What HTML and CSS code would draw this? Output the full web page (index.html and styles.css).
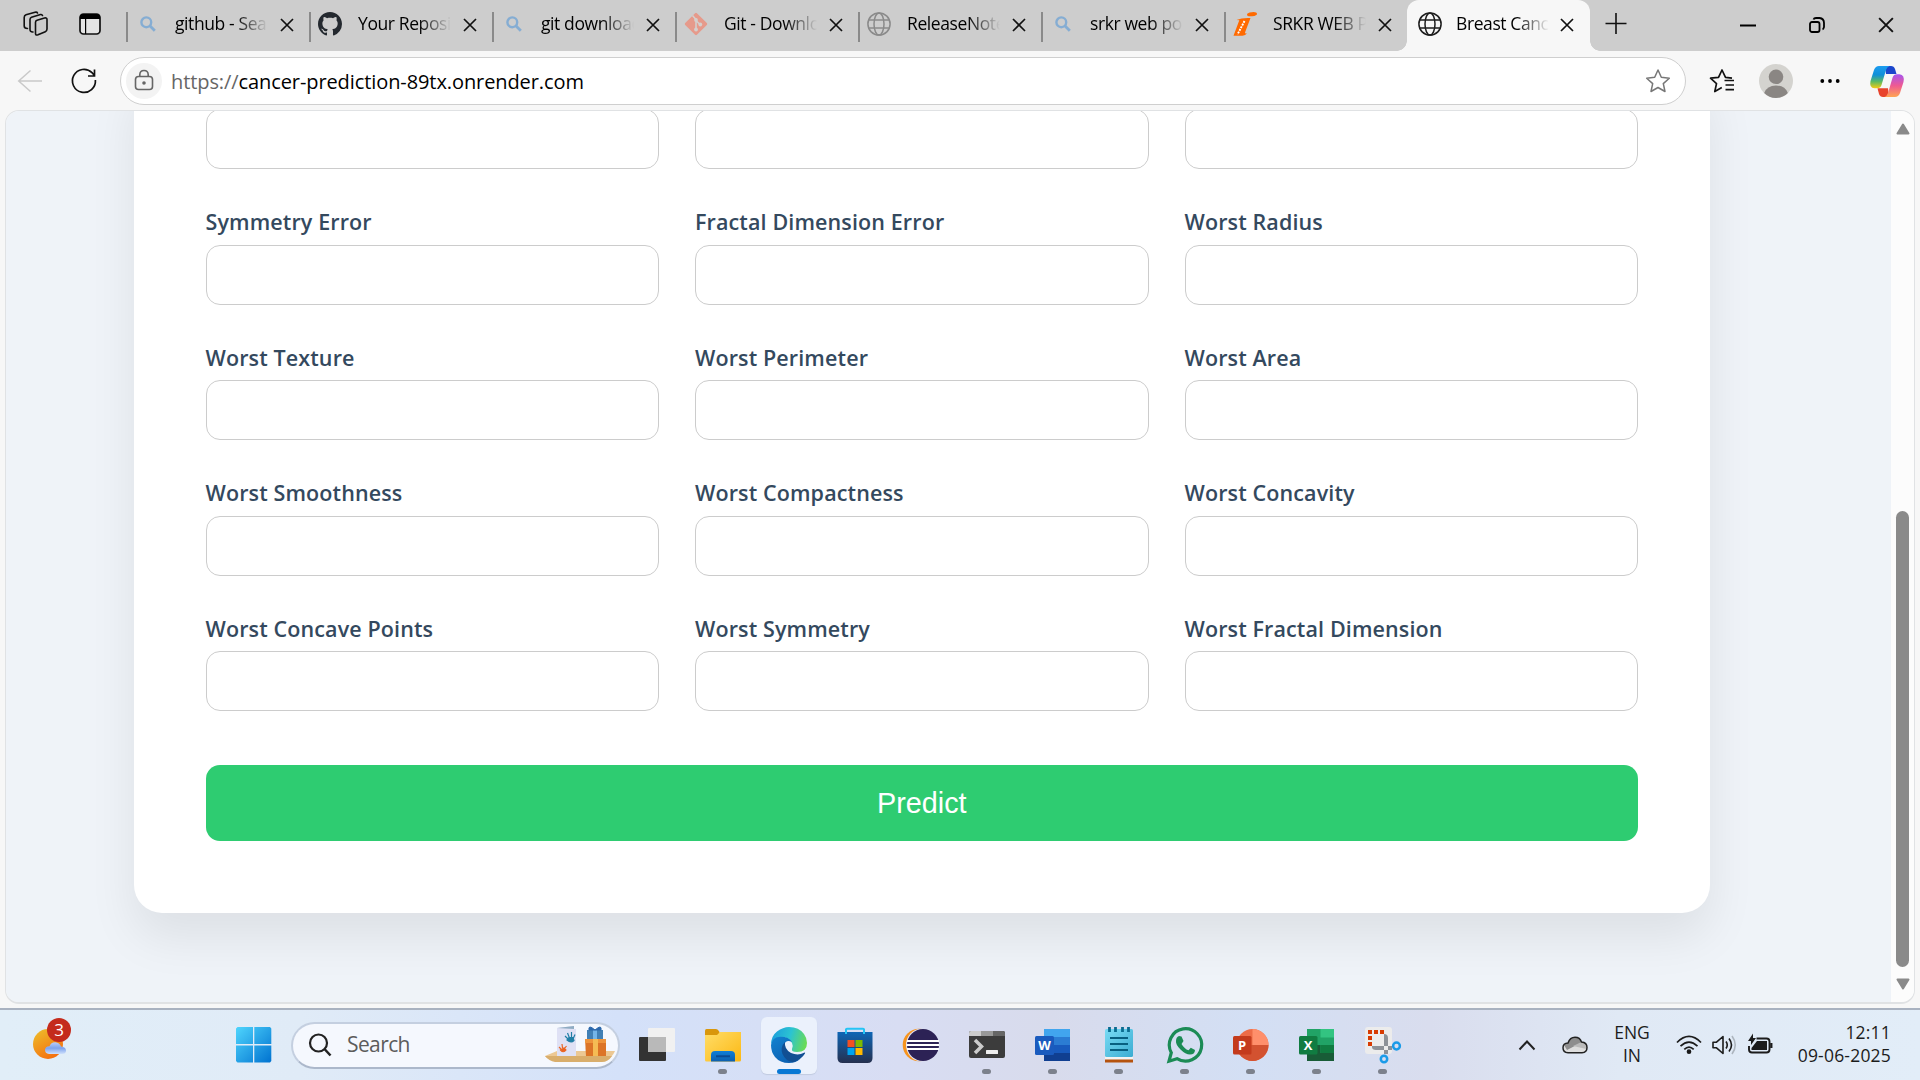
FILE: index.html
```html
<!DOCTYPE html>
<html lang="en">
<head>
<meta charset="utf-8">
<title>Breast Cancer Prediction</title>
<link rel="stylesheet" href="styles.css">
</head>
<body>
<svg class="defs" width="0" height="0">
  <defs>
    <symbol id="x" viewBox="0 0 14 14"><path d="M1 1l12 12M13 1L1 13" fill="none" stroke="#111" stroke-width="1.7"/></symbol>
    <symbol id="mag" viewBox="0 0 16 16"><circle cx="6.3" cy="6.3" r="4.9" fill="none" stroke="#85add3" stroke-width="2.4"/><path d="M9.8 9.8l5 5" stroke="#85add3" stroke-width="2.8"/></symbol>
    <symbol id="globe" viewBox="0 0 24 24"><g fill="none" stroke="currentColor" stroke-width="1.5"><circle cx="12" cy="12" r="11.1"/><ellipse cx="12" cy="12" rx="5" ry="11.1"/><path d="M1.8 8h20.4M1.8 16h20.4"/></g></symbol>
    <linearGradient id="win" x1="0" y1="0" x2="1" y2="1"><stop offset="0" stop-color="#4fd5fd"/><stop offset="1" stop-color="#0072d0"/></linearGradient>
    <linearGradient id="sun" x1="0" y1="0" x2=".6" y2="1"><stop offset="0" stop-color="#edc12c"/><stop offset="1" stop-color="#f4700f"/></linearGradient>
    <linearGradient id="cloud" x1="0" y1="0" x2="0" y2="1"><stop offset="0" stop-color="#b9cdfa"/><stop offset=".5" stop-color="#7da3ee"/><stop offset="1" stop-color="#cfe0fb"/></linearGradient>
    <linearGradient id="folder" x1="0" y1="0" x2="1" y2="1"><stop offset="0" stop-color="#ffdd68"/><stop offset="1" stop-color="#fcb813"/></linearGradient>
    <linearGradient id="blue" x1="0" y1="0" x2="0" y2="1"><stop offset="0" stop-color="#0f7fd8"/><stop offset="1" stop-color="#0c5fae"/></linearGradient>
    <linearGradient id="store" x1="0" y1="0" x2="0" y2="1"><stop offset="0" stop-color="#0e66b6"/><stop offset="1" stop-color="#25304f"/></linearGradient>
    <linearGradient id="edgeTop" x1="0" y1=".4" x2="1" y2=".6"><stop offset="0" stop-color="#1c9fdc"/><stop offset=".5" stop-color="#2bc3d2"/><stop offset="1" stop-color="#6bdc52"/></linearGradient>
    <linearGradient id="edgeLow" x1="0" y1="0" x2=".7" y2="1"><stop offset="0" stop-color="#1182d0"/><stop offset="1" stop-color="#0d5fb0"/></linearGradient>
    <linearGradient id="note" x1="0" y1="0" x2="1" y2="1"><stop offset="0" stop-color="#79dbf4"/><stop offset="1" stop-color="#3bacd2"/></linearGradient>
    <linearGradient id="copA" x1="0" y1="0" x2="0" y2="1"><stop offset="0" stop-color="#1c9cf0"/><stop offset=".4" stop-color="#0f8fd8"/><stop offset=".7" stop-color="#5cba62"/><stop offset="1" stop-color="#f6cb12"/></linearGradient>
    <linearGradient id="copB" x1="0" y1="0" x2="0" y2="1"><stop offset="0" stop-color="#a755ee"/><stop offset=".5" stop-color="#ef5a92"/><stop offset="1" stop-color="#ffa552"/></linearGradient>
  </defs>
</svg>

<div class="tabs">
  <div class="tab-tools">
    <svg width="26" height="26" viewBox="0 0 26 26" fill="none" stroke="#111" stroke-width="1.6" stroke-linejoin="round" stroke-linecap="round"><path d="M12.500 11.200Q12.500 9.700 14 9.200L21.500 7Q24 6.400 24 8.600V18Q24 20 22.300 20.700L15 23.800Q12.500 24.700 12.500 22.500z"/><path d="M10 21Q7 21.200 7 18.500V8.500Q7 6.800 8.500 6.200L17.500 3.600Q19 3.200 19.500 4.500"/><path d="M4.500 17.500Q1.200 17.500 1.200 15V6.500Q1.200 4.500 3 3.800L12 1.200Q14 .8 14.500 2"/></svg>
    <svg width="22" height="22" viewBox="0 0 22 22"><rect x="1" y="1" width="20" height="20" rx="3.500" fill="#e4e4e4" stroke="#111" stroke-width="1.700"/><path d="M1 6V4q0-3 3-3h14q3 0 3 3v2zM6 6h1.200v15H6z" fill="#000"/></svg>
  </div>
  <div class="tab"><svg class="fav small"><use href="#mag"/></svg><span class="title">github - Search</span><svg class="close"><use href="#x"/></svg></div>
  <div class="tab"><svg class="fav" viewBox="0 0 16 16"><path fill="#24292f" d="M8 0C3.580 0 0 3.580 0 8c0 3.540 2.290 6.530 5.470 7.590.4.070.550-.170.550-.380 0-.190-.010-.820-.010-1.490-2.010.370-2.530-.490-2.690-.940-.090-.230-.480-.940-.820-1.130-.280-.150-.680-.520-.010-.530.630-.010 1.080.580 1.230.820.720 1.210 1.870.870 2.330.660.070-.520.280-.870.510-1.070-1.780-.2-3.640-.890-3.640-3.950 0-.870.310-1.590.820-2.150-.080-.2-.360-1.020.080-2.120 0 0 .670-.210 2.200.820.640-.180 1.320-.270 2-.270s1.360.090 2 .270c1.530-1.040 2.200-.820 2.200-.820.440 1.100.160 1.920.080 2.120.510.560.820 1.270.820 2.150 0 3.070-1.870 3.750-3.650 3.950.290.250.540.730.540 1.480 0 1.070-.010 1.930-.010 2.200 0 .210.150.460.550.380A8.010 8.010 0 0016 8c0-4.420-3.580-8-8-8z"/></svg><span class="title">Your Repositories</span><svg class="close"><use href="#x"/></svg></div>
  <div class="tab"><svg class="fav small"><use href="#mag"/></svg><span class="title">git download</span><svg class="close"><use href="#x"/></svg></div>
  <div class="tab"><svg class="fav" viewBox="0 0 24 24"><rect x="3.700" y="3.700" width="16.600" height="16.600" rx="1.300" transform="rotate(45 12 12)" fill="#e69a8b"/><path d="M8.500 3.500l3.500 4v10M12 8.500l4 4" stroke="#d4d0ce" stroke-width="1.600" fill="none"/><circle cx="12" cy="8" r="1.900" fill="#d4d0ce"/><circle cx="12" cy="17.500" r="1.900" fill="#d4d0ce"/><circle cx="16.300" cy="12.500" r="1.900" fill="#d4d0ce"/></svg><span class="title">Git - Downloads</span><svg class="close"><use href="#x"/></svg></div>
  <div class="tab"><svg class="fav gray"><use href="#globe"/></svg><span class="title">ReleaseNotes</span><svg class="close"><use href="#x"/></svg></div>
  <div class="tab"><svg class="fav small"><use href="#mag"/></svg><span class="title">srkr web portal</span><svg class="close"><use href="#x"/></svg></div>
  <div class="tab"><svg class="fav" viewBox="0 0 24 24"><ellipse cx="19" cy="2.200" rx="5" ry="2" transform="rotate(-6 19 2.200)" fill="#ff6a00"/><path d="M3.500 8Q9 5.500 17.500 6L12 20.500q-.3 1.200 2 .8-1.500 2.400-4.500 2.500H.5L6.300 8.300z" fill="#ff6a00"/><path d="M11.500 9L4.500 22.500" stroke="#fff" stroke-width="1.900" stroke-dasharray="2 1"/></svg><span class="title">SRKR WEB PORTAL</span><svg class="close"><use href="#x"/></svg></div>
  <div class="tab active"><svg class="fav"><use href="#globe"/></svg><span class="title">Breast Cancer</span><svg class="close"><use href="#x"/></svg></div>
  <svg class="plus" width="22" height="22" viewBox="0 0 22 22"><path d="M11 0v21M.5 10.500h21" stroke="#111" stroke-width="1.600"/></svg>
  <div class="win-controls">
    <svg width="16" height="16" viewBox="0 0 16 16"><path d="M0 8.500h16" stroke="#000" stroke-width="2"/></svg>
    <svg width="16" height="16" viewBox="0 0 16 16" fill="none" stroke="#000" stroke-width="1.800"><rect x="1" y="5" width="9.500" height="10" rx="2"/><path d="M4.500 2.500Q5 1 7 1h3.500Q15 1.500 15 6v4Q14.500 12 13.500 12.300"/></svg>
    <svg width="16" height="16"><use href="#x"/></svg>
  </div>
</div>

<div class="toolbar">
  <svg class="back" width="26" height="24" viewBox="0 0 26 24"><path d="M24 12H.7M12.500 1.500L.7 12l11.800 10.500" fill="none" stroke="#c9c9c9" stroke-width="1.500"/></svg>
  <svg class="reload" width="26" height="26" viewBox="0 0 26 26"><path d="M24.400 12A11.500 11.500 0 1 1 21 4.700L23.500 7.500M23.500 1.500V8H17" fill="none" stroke="#111" stroke-width="1.700"/></svg>
  <div class="omnibox">
    <span class="lock"><svg width="20" height="22" viewBox="0 0 20 22" fill="none" stroke="#666" stroke-width="1.600"><rect x="1.500" y="7.500" width="17" height="13" rx="3"/><path d="M5.800 7.500V5.500Q6 1.500 10 1.500t4.200 4v2"/><circle cx="10" cy="14" r="1" fill="#555"/></svg></span>
    <span class="url"><i>https://</i>cancer-prediction-89tx.onrender.com</span>
    <svg class="star" width="26" height="26" viewBox="0 0 26 26"><path d="M13 2l3.300 7.300 8 .9-6 5.400 1.700 7.900-7-4-7 4 1.700-7.900-6-5.400 8-.9z" fill="none" stroke="#777" stroke-width="1.500" stroke-linejoin="round"/></svg>
  </div>
  <div class="actions">
    <svg width="26" height="26" viewBox="0 0 26 26"><path d="M25 12.500H15.500M25 17h-8.500M25 21.700h-8.500M12.800 19.600l-7 3.900 1.700-7.900-6-5.400 8-.9L13 2l3.500 7.300 6.500.8" fill="none" stroke="#111" stroke-width="1.700" stroke-linejoin="round"/></svg>
    <svg class="avatar" width="34" height="34" viewBox="0 0 34 34"><circle cx="17" cy="17" r="17" fill="#d4d3cf"/><circle cx="17" cy="12.800" r="7.300" fill="#8a8683"/><path d="M5.200 29Q8 21.500 17 21.500T28.800 29Q24 34 17 34T5.200 29z" fill="#8a8683"/></svg>
    <svg class="dots" width="20" height="6" viewBox="0 0 20 6"><circle cx="2.300" cy="3" r="1.900"/><circle cx="10" cy="3" r="1.900"/><circle cx="17.700" cy="3" r="1.900"/></svg>
    <svg class="copilot" width="34" height="31" viewBox="0 0 34 31"><path d="M15 0h6q3 0 4 3l1.500 5H16z" fill="#1b46cc"/><path d="M19 31h-6q-3 0-4-3l-1.500-5.700H18z" fill="#e8432c"/><path d="M9 0h10.500q-2.500 1-3.500 4L11.500 19Q10.500 22.300 7 22.300H4.500Q-1 22 .5 15L4 4Q5.500 0 9 0z" fill="url(#copA)"/><path d="M25 31H14.500q2.500-1 3.500-4l4.500-15.300Q23.500 8.300 27 8.300h2.500Q35 9 33.500 16L30 27q-1.500 4-5 4z" fill="url(#copB)"/></svg>
  </div>
</div>

<div class="frame">
  <div class="page">
    <form class="card">
      <div class="fields">
        <label><input></label><label><input></label><label><input></label>
        <label><span>Symmetry Error</span><input></label>
        <label><span>Fractal Dimension Error</span><input></label>
        <label><span>Worst Radius</span><input></label>
        <label><span>Worst Texture</span><input></label>
        <label><span>Worst Perimeter</span><input></label>
        <label><span>Worst Area</span><input></label>
        <label><span>Worst Smoothness</span><input></label>
        <label><span>Worst Compactness</span><input></label>
        <label><span>Worst Concavity</span><input></label>
        <label><span>Worst Concave Points</span><input></label>
        <label><span>Worst Symmetry</span><input></label>
        <label><span>Worst Fractal Dimension</span><input></label>
      </div>
      <button type="button">Predict</button>
    </form>
  </div>
  <div class="scrollbar">
    <svg width="14" height="12" viewBox="0 0 14 12"><path d="M7 1.500L12.500 10.500H1.500z" fill="#8a8a8a" stroke="#8a8a8a" stroke-width="2" stroke-linejoin="round"/></svg>
    <div class="thumb"></div>
    <svg width="14" height="12" viewBox="0 0 14 12"><path d="M7 10.500L12.500 1.500H1.500z" fill="#8a8a8a" stroke="#8a8a8a" stroke-width="2" stroke-linejoin="round"/></svg>
  </div>
</div>

<div class="taskbar">
  <div class="weather">
    <svg width="36" height="36" viewBox="0 0 36 36"><circle cx="15" cy="17" r="15" fill="url(#sun)"/><path d="M16 27q-4-.5-4-4t4.500-3.700Q18 15 22.500 15.300q4 .5 5.500 4.200 5 .5 5 4t-4 3.500z" fill="url(#cloud)"/></svg>
    <span class="badge">3</span>
  </div>
  <svg class="start" width="36" height="36" viewBox="0 0 36 36"><path d="M1.500 0H17v17H0V1.500zM18.300 0H34L35.300 1.500V17h-17zM0 18.500h17V35.500H1.500L0 34zM18.300 18.500h17V34L34 35.500H18.300z" fill="url(#win)"/></svg>
  <div class="search">
    <svg width="24" height="24" viewBox="0 0 24 24"><circle cx="10.500" cy="10" r="8.500" fill="none" stroke="#222" stroke-width="2.200"/><path d="M16.500 16l6 6.500" stroke="#222" stroke-width="2.500"/></svg>
    <span>Search</span>
    <svg class="gift" width="71" height="38" viewBox="0 0 71 38"><path d="M0 30l12-5h58q-3 7-9 9H9Q3 34 0 30z" fill="#ecc893"/><path d="M0 30h67q-4 6-10 6H10Q4 35 0 30z" fill="#d9ae6c"/><path d="M12 2l17-2v3h2v27H12z" fill="#dfe1f5"/><path d="M12 2l17-2v3z" fill="#8eabc2"/><path d="M23 13l-3-3M24.500 12l-2-5M26.500 12V6M28 13l2-4.500M22 14q4 3.500 7 .5l-1-3h-4z" stroke="#217fa6" stroke-width="1.200" fill="#217fa6"/><path d="M16 23l-2-2M17.500 22l-.5-4M19.500 22.500l2-2.500M15.500 24q3 3.500 5.500 0l-2-2z" stroke="#eb6422" stroke-width="1.200" fill="#eb6422"/><path d="M42 4h16v10H42z" fill="#4180b5"/><path d="M48 4h4v10h-4z" fill="#74b5e8"/><path d="M50 4Q43-2 44 4zM50 4q7-6 6 0z" fill="#2c69ac" stroke="#2c69ac"/><path d="M40 13h21v17H41z" fill="#dc7427"/><path d="M40 13h21v4H40z" fill="#ee943c"/><path d="M48 13h5v17h-5z" fill="#f5bb54"/></svg>
  </div>
  <div class="apps">
    <div class="app"><svg viewBox="0 0 36 36"><rect x="0" y="10" width="27" height="24" rx="1" fill="#333"/><rect x="9" y="1" width="27" height="24" rx="1" fill="#f1f1f1"/><rect x="9" y="10" width="18" height="15" fill="#b9b9b9"/></svg></div>
    <div class="app run"><svg viewBox="0 0 36 36"><path d="M0 3.500Q0 2 1.500 2H11q2 0 3.500 3V10H0z" fill="#d9970c"/><path d="M0 8h12l3-3h21v28q0 1.500-1.500 1.500h-33Q0 34.500 0 33z" fill="url(#folder)"/><path d="M6 34.500V28q0-4 4-4h16q4 0 4 4v6.500z" fill="url(#blue)"/><path d="M11 29.300h14" stroke="#0a4a92" stroke-width="2"/></svg></div>
    <div class="app run current"><svg viewBox="0 0 36 36"><path d="M0 18Q0 9 6 4.500 12 0 18 0q10 0 15 7 3 4 3 9 0 9-10 9-6 0-5-3 1.500-3 0-6-3-6-10-6Q3 10 0 18z" fill="url(#edgeTop)"/><path d="M0 18Q1 10 9.500 9.800 18 9.700 21 15q-6-3-8 3-1 7 5 12 6 4 11 2Q25 36 18 36 9 36 4 30 0 25 0 18z" fill="url(#edgeLow)"/><path d="M14 15q-5 5-2.500 12 3 7 10.500 8.200Q30 33 34 26.500q.5-1.500-1-.7Q27 29 20 26q-7-4-6-11z" fill="#114f93"/></svg></div>
    <div class="app"><svg viewBox="0 0 36 36"><path d="M9 6V2.500Q9 1.800 10 1.800h16q1 0 1 .7V6" fill="none" stroke="#25c4f5" stroke-width="2"/><path d="M.5 5h35v26q0 5-5 5h-25q-5 0-5-5z" fill="url(#store)"/><path d="M9 2v5M27 2v5" stroke="#25c4f5" stroke-width="2"/><path d="M10.500 13h7v7h-7z" fill="#f25022"/><path d="M18.500 13h7v7h-7z" fill="#7fba00"/><path d="M10.500 21h7v7h-7z" fill="#00a4ef"/><path d="M18.500 21h7v7h-7z" fill="#ffb900"/></svg></div>
    <div class="app"><svg viewBox="0 0 36 36"><circle cx="16" cy="18" r="16.300" fill="#f7941e"/><ellipse cx="18" cy="18" rx="15" ry="16.300" fill="#dfe1f3"/><circle cx="20" cy="18" r="16" fill="#2c2255"/><path d="M4 14h32M3.500 18h32.500M4 22h32" stroke="#fff" stroke-width="1.900"/></svg></div>
    <div class="app run"><svg viewBox="0 0 36 36"><path d="M0 6q0-2 2-2h32q2 0 2 2v23q0 2-2 2H2q-2 0-2-2z" fill="#3c3c3c"/><path d="M0 9V6q0-2 2-2h10v5z" fill="#ccc"/><path d="M12 4h12v5H12z" fill="#999"/><path d="M24 4h10q2 0 2 2v3H24z" fill="#666"/><path d="M6 13l6.500 6.500L6 26" fill="none" stroke="#ccc" stroke-width="3.500"/><rect x="17" y="23" width="12" height="4" rx=".5" fill="#eee"/></svg></div>
    <div class="app run"><svg viewBox="0 0 36 36"><path d="M9 2h26v8.500H9z" fill="#41a5ee"/><path d="M9 10h26v8H9z" fill="#2b7cd3"/><path d="M9 18h26v8H9z" fill="#185abd"/><path d="M9 26h26v8H9z" fill="#103f91"/><rect x="0" y="9" width="19" height="19" rx="1.500" fill="#1a5bbe"/><text x="9.500" y="23" class="glyph">W</text></svg></div>
    <div class="app run"><svg viewBox="0 0 36 36"><path d="M4 31h28v4.500H4z" fill="#b5530f"/><path d="M4 29h28v3.500H4z" fill="#f3f3f3"/><rect x="4" y="2" width="28" height="28" rx="1.500" fill="url(#note)"/><path d="M9 11h18M9 17h18M9 23h18" stroke="#075f81" stroke-width="1.900"/><path d="M8.500 0v5M14.500 0v5M21.500 0v5M27.500 0v5" stroke="#0a6c90" stroke-width="2.800"/></svg></div>
    <div class="app run"><svg viewBox="0 0 36 36"><path d="M2 34.200l2.300-8.500A16.200 16.200 0 1 1 10 31.700z" fill="none" stroke="#1b8b55" stroke-width="3.200"/><path d="M12 9l2.500.5 2 4.500-2 3q3 5 7 6.300l2.300-2.500 4.200 2.200q-.2 4.500-5 4.500-4.500 0-9.500-5T9 14q0-4 3-5z" fill="#1b8b55"/></svg></div>
    <div class="app run"><svg viewBox="0 0 36 36"><circle cx="19.500" cy="18" r="16" fill="#ed6c47"/><path d="M19.500 2a16 16 0 0 1 16 16h-16z" fill="#ff8f6b"/><path d="M35.500 18a16 16 0 0 1-32 0z" fill="#d35230"/><rect x="0" y="9" width="18.500" height="18.500" rx="1.500" fill="#c43b1c"/><text x="9" y="23" class="glyph">P</text></svg></div>
    <div class="app run"><svg viewBox="0 0 36 36"><path d="M8 2h27v32H8z" fill="#21a366"/><path d="M21.500 2H35v8.500H21.500z" fill="#33c481"/><path d="M8 18h13.500v8H8z" fill="#185c37"/><path d="M21.500 18H35v8H21.500z" fill="#107c41"/><path d="M8 26h27v8H8z" fill="#185c37"/><rect x="0" y="9" width="18.500" height="18.500" rx="1.500" fill="#107c41"/><text x="9" y="23" class="glyph">X</text></svg></div>
    <div class="app run"><svg viewBox="0 0 36 36"><rect x="0" y="0" width="27" height="27" rx="3" fill="#ececec"/><path d="M3 3h4v4H3zM9 3h4v4H9zM15 3h4v4h-4zM3 9h4v4H3zM3 15h4v4H3z" fill="#d83b01"/><path d="M7 20q0 3 4 3h16v-4H7zM19 7q4 0 4 4v16h-4z" fill="#8d9298"/><circle cx="31.500" cy="19" r="3.400" fill="none" stroke="#1a9be8" stroke-width="2.500"/><circle cx="19" cy="32" r="3.200" fill="none" stroke="#1a9be8" stroke-width="2.500"/></svg></div>
  </div>
  <div class="tray">
    <svg class="chev" width="18" height="12" viewBox="0 0 18 12"><path d="M1.500 10.500L9 2.500l7.500 8" fill="none" stroke="#222" stroke-width="2"/></svg>
    <svg class="cloud" width="26" height="18" viewBox="0 0 26 18"><path d="M6 16.800Q1 16.500 1 11.800T6 7Q8 1.200 13 1.200T19.500 6Q25 6.500 25 11.500t-5 5.300z" fill="#dedede"/><path d="M2 9q2-2.500 4-2 2-5.500 7-5.500 4.500 0 6.500 5L5 14z" fill="#8e8e8e"/><path d="M11 10l8.500-4Q25 7 24.500 13z" fill="#bbb"/><path d="M6 16.800Q1 16.500 1 11.800T6 7Q8 1.200 13 1.200T19.500 6Q25 6.500 25 11.500t-5 5.300z" fill="none" stroke="#222" stroke-width="1.500"/></svg>
    <div class="lang"><span>ENG</span><span>IN</span></div>
    <svg class="wifi" width="26" height="20" viewBox="0 0 26 20" fill="none" stroke="#1c1c1c" stroke-width="1.700"><path d="M1 7.500Q13-4.500 25 7.500M4.500 11.200q8.500-8 17 0M8.300 14.300q4.700-4.500 9.400 0"/><circle cx="13" cy="16.700" r="1.500" fill="#111"/></svg>
    <svg class="vol" width="26" height="20" viewBox="0 0 26 20" fill="none" stroke="#1c1c1c" stroke-width="1.600"><path d="M1 7.200h3.500L11 1.500v17l-6.500-5.700H1z" stroke-linejoin="round"/><path d="M14 6.500q2.500 3.500 0 7M17 3.500q5 6.500 0 13"/><path d="M20 1q6.500 9 0 18" stroke="#aeb6bf"/></svg>
    <svg class="bat" width="26" height="20" viewBox="0 0 26 20"><path d="M8.500 3.500H18.500q3 0 3 3v8q0 3-3 3H4q-3 0-3-3v-3.500M23.500 8v5" fill="none" stroke="#1c1c1c" stroke-width="1.900"/><path d="M9 6H19v9H3.500v-2z" fill="#1c1c1c"/><path d="M5-1.500V3h3L3 10V6H0z" fill="#1c1c1c"/></svg>
    <div class="clock"><span>12:11</span><span>09-06-2025</span></div>
  </div>
</div>
</body>
</html>
```
FILE: styles.css
```css
* { box-sizing: border-box; }
body {
  margin: 0;
  width: 1920px;
  height: 1080px;
  overflow: hidden;
  display: flex;
  flex-direction: column;
  background: #f7f7f7;
  font-family: "Open Sans", "Noto Sans", sans-serif;
}
.defs { position: absolute; }
svg { display: block; flex: none; overflow: visible; }

/* Tab strip */
.tabs {
  height: 51px;
  flex: none;
  display: flex;
  background: #cdcdcd;
}
.tab-tools {
  width: 126px;
  padding: 11px 0 0 23px;
  display: flex;
  gap: 30px;
}
.tab-tools svg + svg { margin-top: 2px; }
.tab {
  width: 183px;
  height: 51px;
  padding: 0 15px 3px 9px;
  display: flex;
  align-items: center;
  position: relative;
}
.tab::before {
  content: "";
  position: absolute;
  left: 0;
  top: 12px;
  width: 2px;
  height: 30px;
  background: #8a8a8a;
}
.fav { width: 24px; height: 24px; margin-right: 16px; color: #1d1d1d; }
.fav.small { width: 16px; height: 16px; margin: 0 19px 0 5px; }
.fav.gray { color: #8a8a8a; }
.title {
  width: 93px;
  padding-bottom: 2px;
  font-size: 17.5px;
  letter-spacing: -0.4px;
  white-space: nowrap;
  overflow: hidden;
  color: #000;
  -webkit-mask-image: linear-gradient(90deg, #000 65%, transparent 100%);
  mask-image: linear-gradient(90deg, #000 65%, transparent 100%);
}
.close { width: 14px; height: 14px; margin: 2px 0 0 auto; }
.tab.active {
  background: #f7f7f7;
  border-radius: 12px 12px 0 0;
  padding-left: 11px;
  padding-right: 16px;
}
.active .fav { margin-right: 14px; }
.tab.active::before {
  left: -10px;
  top: 41px;
  width: 10px;
  height: 10px;
  background: radial-gradient(circle at 0 0, transparent 9.5px, #f7f7f7 10px);
}
.tab.active::after {
  content: "";
  position: absolute;
  right: -10px;
  top: 41px;
  width: 10px;
  height: 10px;
  background: radial-gradient(circle at 100% 0, transparent 9.5px, #f7f7f7 10px);
}
.plus { margin: 13px 0 0 15px; }
.win-controls {
  margin-left: auto;
  padding: 17px 26px 0 0;
  display: flex;
  gap: 53px;
}

/* Address row */
.toolbar {
  height: 59px;
  flex: none;
  display: flex;
  align-items: center;
  padding: 1px 16px 0 18px;
}
.reload { margin-left: 27px; }
.omnibox {
  width: 1566px;
  height: 48px;
  margin-left: 23px;
  padding: 0 14px 0 5px;
  display: flex;
  align-items: center;
  background: #fff;
  border: 1.5px solid #cfcfcf;
  border-radius: 24px;
}
.lock {
  width: 36px;
  height: 36px;
  display: grid;
  place-items: center;
  padding-bottom: 3px;
  border-radius: 50%;
  background: #f3f3f3;
}
.url {
  margin-left: 9px;
  font-size: 20px;
  letter-spacing: -0.09px;
  color: #000;
}
.url i { font-style: normal; color: #666; }
.star { margin-left: auto; }
.actions {
  flex: 1;
  display: flex;
  align-items: center;
  padding-left: 23px;
}
.avatar { margin-left: 24px; }
.dots { margin-left: 27px; }
.copilot { margin-left: auto; }

/* Web page */
.frame {
  height: 894px;
  flex: none;
  margin: 0 5px 4px;
  display: flex;
  overflow: hidden;
  border: 1px solid #e0e2e4;
  border-bottom-width: 2px;
  border-radius: 14px;
}
.page {
  flex: 1;
  overflow: hidden;
  background: #eff3f8;
}
.card {
  width: 1576.500px;
  margin: -43px 0 0 127.500px;
  padding: 41px 72px 72px;
  background: #fff;
  border-radius: 28px;
  box-shadow: 0 24px 48px rgba(0, 0, 0, 0.08);
}
.fields {
  display: grid;
  grid-template-columns: repeat(3, 1fr);
  gap: 38px 36px;
}
label { display: block; }
label span {
  display: block;
  height: 30px;
  margin-bottom: 7.600px;
  line-height: 29px;
  font-size: 21.500px;
  font-weight: 600;
  letter-spacing: 0.12px;
  color: #34495e;
  white-space: nowrap;
}
input {
  display: block;
  width: 100%;
  height: 60px;
  border: 1.200px solid #ccc;
  border-radius: 14px;
  background: #fff;
}
button {
  display: block;
  width: 100%;
  height: 76px;
  margin-top: 54px;
  border: 0;
  border-radius: 14px;
  background: #2ecc71;
  color: #fff;
  font: 28.800px "Liberation Sans", Arial, sans-serif;
}
.scrollbar {
  width: 23px;
  display: flex;
  flex-direction: column;
  align-items: center;
  padding: 12px 0 12px;
  background: #fcfcfc;
}
.thumb {
  width: 13px;
  height: 456px;
  margin: auto 0 11px;
  border-radius: 7px;
  background: #8a8a8a;
}

/* Taskbar */
.taskbar {
  height: 72px;
  flex: none;
  display: flex;
  align-items: center;
  border-top: 2px solid #a9b2c0;
  background: linear-gradient(90deg, #e1eef8 0, #e0ebf7 300px, #d4e1f9 620px, #d8ddf3 900px, #d8dbec 1050px, #d3dff4 1250px, #d9ddee 1430px, #e0e9f5 1620px, #e2edf8 1920px);
}
.weather { width: 203px; margin-left: 33px; position: relative; }
.badge {
  position: absolute;
  left: 14px;
  top: -9px;
  width: 24px;
  height: 24px;
  border-radius: 50%;
  background: #c42b1c;
  color: #fff;
  font-size: 17px;
  line-height: 23px;
  text-align: center;
}
.search {
  width: 329px;
  height: 47px;
  margin-left: 19px;
  padding: 0 2px 0 15px;
  display: flex;
  align-items: center;
  border: 2px solid #c4cfe0;
  border-bottom-color: #acb8cb;
  border-radius: 24px;
  background: #f5f8fe;
  font-size: 21px;
  letter-spacing: -0.6px;
  color: #5c5c5c;
}
.search span { margin: 0 0 2px 15px; }
.gift { margin-left: auto; }
.apps { display: flex; margin-left: 3.500px; }
.app {
  width: 56px;
  height: 57px;
  margin: 0 5px;
  padding-top: 10px;
  display: flex;
  flex-direction: column;
  align-items: center;
  border-radius: 6px;
}
.app svg { width: 36px; height: 36px; }
.run::after {
  content: "";
  width: 9px;
  height: 5px;
  margin-top: 6px;
  border-radius: 3px;
  background: #7c818c;
}
.current { background: #ebf1fc; box-shadow: 0 1px 1px #c1cbe0; }
.current::after { width: 24px; background: #0878d4; }
.glyph {
  font: 700 13px "Open Sans", sans-serif;
  fill: #fff;
  text-anchor: middle;
}
.tray {
  margin-left: auto;
  padding-right: 29px;
  display: flex;
  align-items: center;
  font-size: 17.500px;
  line-height: 23.500px;
  color: #1c1c1c;
}
.lang, .clock { display: flex; flex-direction: column; padding-bottom: 2px; }
.cloud { margin-left: 26px; }
.lang { width: 40px; margin-left: 24px; align-items: center; }
.wifi { margin-left: 24px; }
.vol { margin-left: 10px; }
.bat { margin-left: 10px; }
.clock { width: 97px; margin-left: 20px; align-items: flex-end; white-space: nowrap; letter-spacing: 0.2px; }
```
